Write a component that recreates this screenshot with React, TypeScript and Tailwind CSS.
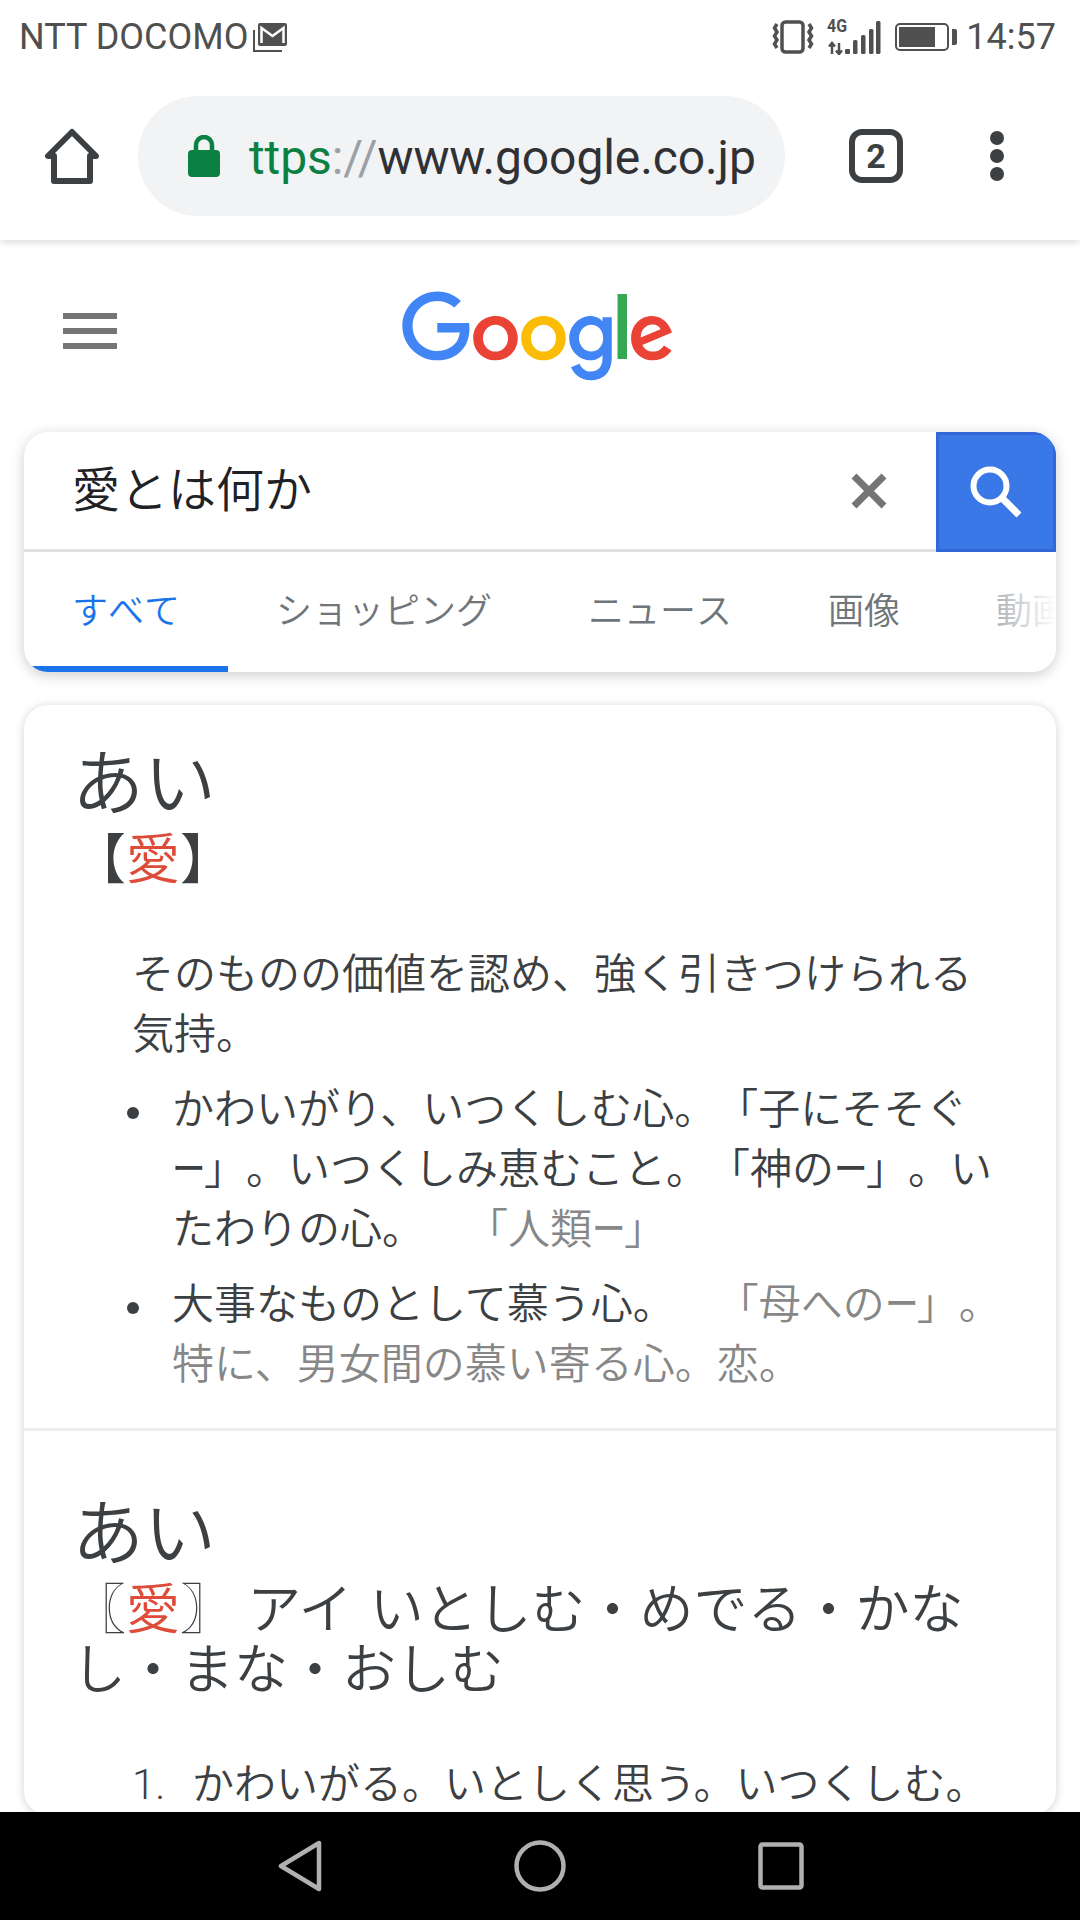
import { ReactNode } from "react";

const tabs = [
  { label: "すべて", active: true },
  { label: "ショッピング" },
  { label: "ニュース" },
  { label: "画像" },
  { label: "動画" },
];

function StatusBar() {
  return (
    <div className="relative z-20 flex h-[72px] shrink-0 items-center bg-white pl-[19px] pr-[24px] pt-[2px] text-[36px] leading-[70px] text-[#505050]">
      <span>NTT DOCOMO</span>
      {/* mail notification */}
      <svg viewBox="0 0 36 32" className="ml-[4px] h-[32px] w-[36px]">
        <path d="M2 9v21h28" fill="none" stroke="#505050" strokeWidth="2" />
        <rect x="6" y="2" width="29" height="23" rx="2" fill="#505050" />
        <path d="M9.500 22V7l11 8 11-8v15" fill="none" stroke="#fff" strokeWidth="2.500" />
      </svg>
      <div className="ml-auto flex items-center">
        {/* vibrate */}
        <svg viewBox="0 0 44 34" className="h-[34px] w-[44px]">
          <rect x="10" y="2" width="21" height="30" rx="3.500" fill="none" stroke="#505050" strokeWidth="3.500" />
          <path d="M5 4L2.500 8 5 12l-2.500 4L5 20l-2.500 4L5 28M37 4l2.500 4L37 12l2.500 4L37 20l2.500 4L37 28" fill="none" stroke="#505050" strokeWidth="3.500" />
        </svg>
        {/* 4G signal */}
        <svg viewBox="0 0 60 36" className="ml-[9px] h-[36px] w-[60px]">
          <text x="2" y="13" fontSize="18" fontWeight="700" fontFamily="Roboto" fill="#505050" textLength="20" lengthAdjust="spacingAndGlyphs">4G</text>
          <path d="M7 35V24M4 27.500L7 24l3 3.500M14 24v11M11 31.500l3 3.500 3-3.500" fill="none" stroke="#505050" strokeWidth="2.500" />
          <rect x="20" y="30" width="5" height="5" rx="1" fill="#505050" />
          <rect x="28" y="21" width="4.500" height="14" rx="1.500" fill="#505050" />
          <rect x="36" y="16" width="4.500" height="19" rx="1.500" fill="#505050" />
          <rect x="44" y="10" width="4.500" height="25" rx="1.500" fill="#505050" />
          <rect x="51" y="2" width="4.500" height="33" rx="1.500" fill="#505050" />
        </svg>
        {/* battery */}
        <div className="ml-[10px] flex items-center">
          <div className="h-[28px] w-[54px] rounded-[5px] border-2 border-[#505050] p-[2px] pr-[12px]">
            <div className="h-full w-full bg-[#505050]" />
          </div>
          <div className="ml-[3px] h-[16px] w-[5px] rounded-r-[2px] bg-[#505050]" />
        </div>
        <span className="ml-[9px]">14:57</span>
      </div>
    </div>
  );
}

function Toolbar() {
  return (
    <div className="relative z-10 flex h-[168px] shrink-0 items-center bg-white shadow-[0_2px_8px_rgba(0,0,0,0.16)]">
      <svg viewBox="0 0 60 60" className="ml-[42px] h-[60px] w-[60px]">
        <path d="M30 6L6 30h6v25h36V30h6z" fill="none" stroke="#3c4043" strokeWidth="6" strokeLinejoin="round" />
      </svg>
      <div className="ml-[36px] flex h-[120px] w-[647px] items-center rounded-full bg-[#f1f3f4] pl-[50px] text-[48px]">
        <svg viewBox="0 0 32 42" className="h-[42px] w-[32px]">
          <rect x="0" y="15" width="32" height="27" rx="4" fill="#0b8043" />
          <path d="M8 17V10a8 8 0 0 1 16 0v7" fill="none" stroke="#0b8043" strokeWidth="4.500" />
        </svg>
        <span className="ml-[29px] mt-[4px] whitespace-nowrap tracking-[-0.1px]">
          <span className="text-[#0b8043]">ttps</span>
          <span className="text-[#9aa0a6]">://</span>
          <span className="text-[#303134]">www.google.co.jp</span>
        </span>
      </div>
      <div className="ml-[64px] flex h-[54px] w-[54px] items-center justify-center rounded-[13px] border-[6px] border-[#3c4043] text-[34px] font-bold text-[#3c4043]">
        2
      </div>
      <div className="ml-[87px] flex flex-col gap-[4px]">
        <div className="h-[14px] w-[14px] rounded-full bg-[#3c4043]" />
        <div className="h-[14px] w-[14px] rounded-full bg-[#3c4043]" />
        <div className="h-[14px] w-[14px] rounded-full bg-[#3c4043]" />
      </div>
    </div>
  );
}

function GoogleLogo() {
  return (
    <svg viewBox="0 0 272 92" className="ml-[285px] mt-[2px] h-[92px] w-[272px]">
      <path fill="#EA4335" d="M115.75 47.18c0 12.77-9.99 22.18-22.25 22.18s-22.25-9.41-22.25-22.18C71.25 34.32 81.24 25 93.5 25s22.25 9.32 22.25 22.18zm-9.74 0c0-7.98-5.79-13.44-12.51-13.44S80.99 39.2 80.99 47.18c0 7.9 5.79 13.44 12.51 13.44s12.51-5.55 12.51-13.44z" />
      <path fill="#FBBC05" d="M163.75 47.18c0 12.77-9.99 22.18-22.25 22.18s-22.25-9.41-22.25-22.18c0-12.85 9.99-22.18 22.25-22.18s22.25 9.32 22.25 22.18zm-9.74 0c0-7.98-5.79-13.44-12.51-13.44s-12.51 5.46-12.51 13.44c0 7.9 5.79 13.44 12.51 13.44s12.51-5.55 12.51-13.44z" />
      <path fill="#4285F4" d="M209.75 26.34v39.82c0 16.38-9.66 23.07-21.08 23.07-10.75 0-17.22-7.19-19.66-13.07l8.48-3.53c1.51 3.61 5.21 7.87 11.17 7.87 7.31 0 11.84-4.51 11.84-13v-3.19h-.34c-2.18 2.69-6.38 5.04-11.68 5.04-11.09 0-21.25-9.66-21.25-22.09 0-12.52 10.16-22.26 21.25-22.26 5.29 0 9.49 2.35 11.68 4.96h.34v-3.61h9.25zm-8.56 20.92c0-7.81-5.21-13.52-11.84-13.52-6.72 0-12.35 5.71-12.35 13.52 0 7.73 5.63 13.36 12.35 13.36 6.63 0 11.84-5.63 11.84-13.36z" />
      <path fill="#34A853" d="M225 3v65h-9.5V3h9.5z" />
      <path fill="#EA4335" d="M262.02 54.48l7.56 5.04c-2.44 3.61-8.32 9.83-18.48 9.83-12.6 0-22.01-9.74-22.01-22.18 0-13.19 9.49-22.18 20.92-22.18 11.51 0 17.14 9.16 18.98 14.11l1.01 2.52-29.65 12.28c2.27 4.45 5.8 6.72 10.75 6.72 4.96 0 8.4-2.44 10.92-6.14zm-23.27-7.98l19.82-8.23c-1.09-2.77-4.37-4.7-8.23-4.7-4.95 0-11.84 4.37-11.59 12.93z" />
      <path fill="#4285F4" d="M35.29 41.41V32H67c.31 1.64.47 3.58.47 5.68 0 7.06-1.93 15.79-8.15 22.01-6.05 6.3-13.78 9.66-24.02 9.66C16.32 69.35.36 53.89.36 34.91.36 15.93 16.32.47 35.3.47c10.5 0 17.98 4.12 23.6 9.49l-6.64 6.64c-4.03-3.78-9.49-6.72-16.97-6.72-13.86 0-24.7 11.17-24.7 25.03 0 13.86 10.84 25.03 24.7 25.03 8.99 0 14.11-3.61 17.39-6.89 2.66-2.66 4.41-6.46 5.1-11.65l-22.49.01z" />
    </svg>
  );
}

function SearchCard() {
  return (
    <div className="mx-[24px] overflow-hidden rounded-[24px] bg-white shadow-[0_3px_14px_rgba(0,0,0,0.2)]">
      <div className="flex h-[120px]">
        <div className="flex flex-1 items-center border-b-[3px] border-[#dfe1e5] pl-[48px] text-[48px] font-[350] text-[#202124]">
          愛とは何か
          <svg viewBox="0 0 36 36" className="ml-auto mr-[49px] h-[36px] w-[36px]">
            <path d="M3 3l30 30M33 3L3 33" stroke="#757575" strokeWidth="7" />
          </svg>
        </div>
        <div className="flex w-[120px] items-center justify-center border-[3px] border-[#3367d6] bg-[#3b78e7]">
          <svg viewBox="0 0 54 54" className="h-[54px] w-[54px]">
            <circle cx="21" cy="21" r="16.500" fill="none" stroke="#fff" strokeWidth="6" />
            <path d="M33 33l17 17" stroke="#fff" strokeWidth="7" />
          </svg>
        </div>
      </div>
      <div className="relative flex h-[120px] overflow-hidden whitespace-nowrap text-[36px] font-[350] [font-kerning:none]">
        {tabs.map((tab) => (
          <div
            key={tab.label}
            className={`relative flex h-full shrink-0 items-center px-[48px] ${tab.active ? "text-[#1a73e8]" : "text-[#70757a]"}`}
          >
            {tab.label}
            {tab.active && <div className="absolute bottom-0 left-[8px] right-0 h-[6px] bg-[#1a73e8]" />}
          </div>
        ))}
        <div className="absolute inset-y-0 right-0 w-[64px] bg-gradient-to-r from-white/40 to-white" />
      </div>
    </div>
  );
}

function Heading({ children }: { children: ReactNode }) {
  return <div className="text-[72px] leading-[72px]">{children}</div>;
}

function Reading({ children }: { children: ReactNode }) {
  return <div className="mt-[10px] whitespace-nowrap text-[54px] leading-[60px]">{children}</div>;
}

const Kanji = () => <span className="text-[#dd4b39]">愛</span>;

// the long vowel mark sits narrower than a full cell in the reference
const Bar = () => (
  <span className="inline-block w-[32px]">
    <span className="inline-block origin-left scale-x-[0.8] font-normal">ー</span>
  </span>
);

function Bullet({ children }: { children: ReactNode }) {
  return (
    <div className="mt-[15px] flex whitespace-nowrap">
      <div className="ml-[55px] mt-[27px] h-[12px] w-[12px] shrink-0 rounded-full bg-[#3c4043]" />
      <div className="ml-[33px]">{children}</div>
    </div>
  );
}

function DefinitionCard() {
  return (
    <div className="mx-[24px] mt-[33px] rounded-[24px] bg-white text-[42px] font-[350] leading-[60px] text-[#3c4043] shadow-[0_1px_10px_rgba(0,0,0,0.18)] [text-spacing-trim:space-all]">
      <section className="px-[48px] pb-[33px] pt-[44px]">
        <Heading>あい</Heading>
        <Reading>
          【<Kanji />】
        </Reading>
        <div className="mt-[54px] whitespace-nowrap pl-[60px]">
          そのものの価値を認め、強く引きつけられる
          <br />
          気持。
        </div>
        <Bullet>
          かわいがり、いつくしむ心。「子にそそぐ
          <br />
          <Bar />」。いつくしみ恵むこと。「神の<Bar />」。い
          <br />
          たわりの心。
          <span className="ml-[42px] text-[#878787]">
            「人類<Bar />」
          </span>
        </Bullet>
        <Bullet>
          大事なものとして慕う心。
          <span className="ml-[42px] text-[#878787]">
            「母への<Bar />」。
          </span>
          <br />
          <span className="text-[#878787]">特に、男女間の慕い寄る心。恋。</span>
        </Bullet>
      </section>
      <section className="border-t-[3px] border-[#ebebeb] px-[48px] pt-[68px]">
        <Heading>あい</Heading>
        <Reading>
          〖<Kanji />〗 アイ <span className="ml-[4px]">いとしむ・めでる・かな</span>
          <br />
          し・まな・おしむ
        </Reading>
        <div className="mt-[54px] flex whitespace-nowrap pl-[60px]">
          <span className="w-[60px]">1.</span>
          <span>かわいがる。いとしく思う。いつくしむ。</span>
        </div>
      </section>
    </div>
  );
}

function NavBar() {
  return (
    <div className="relative z-10 flex h-[108px] shrink-0 items-center bg-black">
      <svg viewBox="0 0 44 52" className="ml-[278px] h-[52px] w-[44px]">
        <path d="M41 3v46L3 26z" fill="none" stroke="#b0b0b0" strokeWidth="4.500" strokeLinejoin="round" />
      </svg>
      <svg viewBox="0 0 52 52" className="ml-[192px] h-[52px] w-[52px]">
        <circle cx="26" cy="26" r="23.500" fill="none" stroke="#b0b0b0" strokeWidth="4.500" />
      </svg>
      <svg viewBox="0 0 46 48" className="ml-[192px] h-[48px] w-[46px]">
        <rect x="2.500" y="2.500" width="41" height="43" rx="2" fill="none" stroke="#b0b0b0" strokeWidth="4.500" />
      </svg>
    </div>
  );
}

export default function App() {
  return (
    <div className="flex h-[1920px] w-[1080px] flex-col overflow-hidden bg-white font-['Roboto','Noto_Sans_CJK_JP',sans-serif]">
      <StatusBar />
      <Toolbar />
      <main className="min-h-0 flex-1 overflow-hidden">
        <div className="flex h-[192px] items-center pl-[63px]">
          <div className="mb-[10px] flex w-[54px] flex-col gap-[9px]">
            <div className="h-[6px] bg-[#757575]" />
            <div className="h-[6px] bg-[#757575]" />
            <div className="h-[6px] bg-[#757575]" />
          </div>
          <GoogleLogo />
        </div>
        <SearchCard />
        <DefinitionCard />
      </main>
      <NavBar />
    </div>
  );
}
